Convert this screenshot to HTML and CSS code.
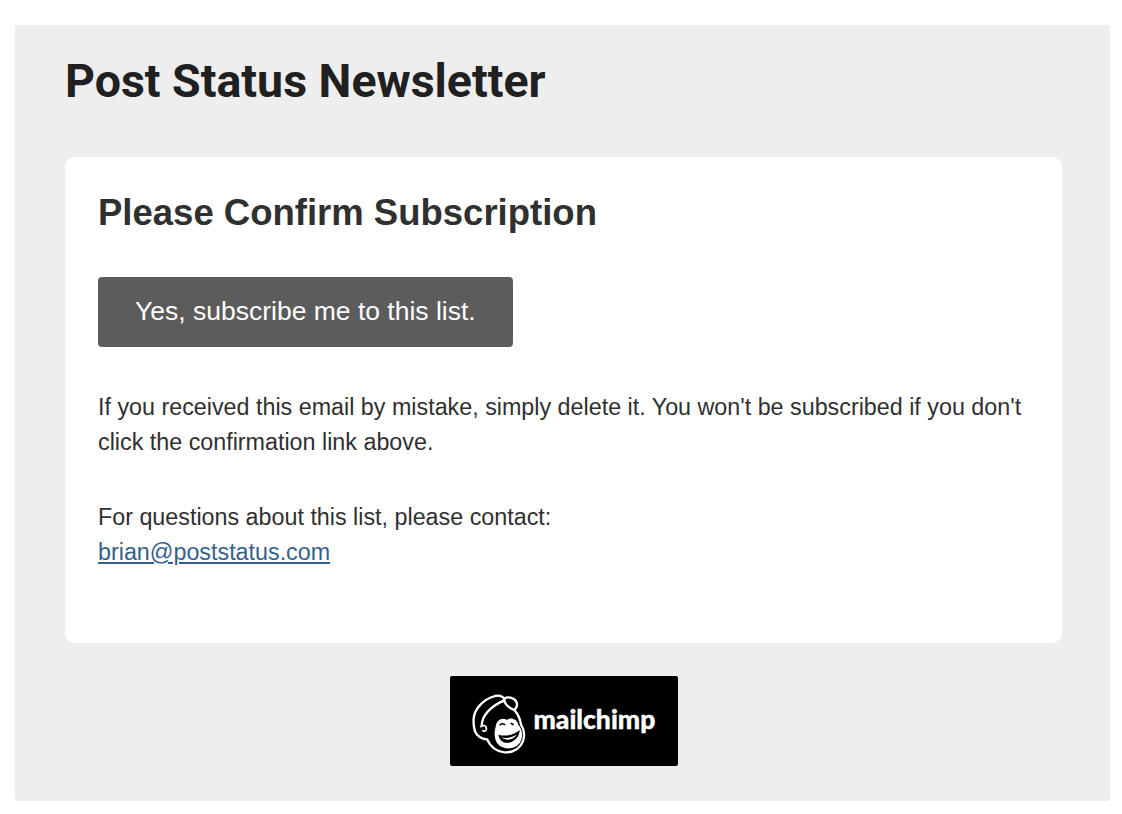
FILE: index.html
```html
<!DOCTYPE html>
<html lang="en">
<head>
    <meta charset="UTF-8">
    <title>Post Status Newsletter</title>
    <link rel="stylesheet" href="styles.css">
</head>
<body>
    <div class="wrapper">
        <h1 class="list-name">Post Status Newsletter</h1>
        <div class="card">
            <h2 class="card-title">Please Confirm Subscription</h2>
            <a class="button" href="#">Yes, subscribe me to this list.</a>
            <p class="copy">If you received this email by mistake, simply delete it. You won't be subscribed if you don't click the confirmation link above.</p>
            <p class="copy">For questions about this list, please contact:<br><a class="contact" href="#">brian@poststatus.com</a></p>
        </div>
        <div class="footer">
            <a class="badge" href="#">
                <svg class="badge-icon" viewBox="0 0 210 210" width="70" height="70">
                    <path class="head" d="M26 98C28 68 55 40 90 30C102 27 112 30 118 38C130 30 150 36 155 50C158 58 154 66 148 72C160 86 166 100 168 116C176 128 180 144 175 162C168 186 144 201 118 199C95 197 76 182 66 160C52 160 36 152 30 136C26 122 25 110 26 98Z"/>
                    <path class="line" d="M50 120C50 90 76 62 116 44M118 38C116 52 130 66 148 72"/>
                    <path class="line-thin" d="M46 124C54 114 66 120 64 130C62 138 54 137 53 132"/>
                    <path class="face" d="M92 122C94 102 112 92 126 102C136 92 156 98 160 116C172 130 175 150 166 168C154 190 120 193 102 178C88 166 86 140 92 122Z"/>
                    <path class="mouth" d="M100 146C120 152 146 148 164 132C164 158 136 178 114 168C106 163 102 155 100 146Z"/>
                    <path class="face" d="M109 154C124 158 144 155 156 145C146 162 124 166 109 154Z"/>
                    <path class="wink" d="M104 118C109 112 116 112 120 117M137 112L146 116"/>
                </svg>
                <span class="badge-text">mailchimp</span>
            </a>
        </div>
    </div>
</body>
</html>
```

FILE: styles.css
```css
html {
    background-color: #fff;
}
body {
    margin: 0;
    padding: 25px 12px 13px 15px;
    font-family: "Liberation Sans", Arial, sans-serif;
    color: #303030;
}
.wrapper {
    background-color: #eee;
    border-radius: 2px;
    padding: 29px 48px 35px 50px;
}
.list-name {
    margin: 0 0 49px;
    font-family: Roboto, sans-serif;
    font-size: 46.5px;
    font-weight: 700;
    line-height: 54px;
    color: #202020;
}
.card {
    background-color: #fff;
    border-radius: 10px;
    padding: 33px 33px 60px;
    height: 486px;
    box-sizing: border-box;
}
.card-title {
    margin: 0 0 42px;
    font-size: 36.5px;
    font-weight: 700;
    line-height: 45px;
}
.button {
    display: inline-block;
    background-color: #5c5c5c;
    border-radius: 4px;
    padding: 0 37px 1px;
    color: #fff;
    font-size: 26.5px;
    line-height: 69px;
    text-decoration: none;
}
.copy {
    margin: 43px 0 -3px;
    font-size: 23.3px;
    line-height: 35px;
}
.contact {
    color: #365f8e;
    text-decoration: underline;
}
.footer {
    display: flex;
    justify-content: center;
    margin-top: 33px;
}
.badge {
    display: flex;
    align-items: center;
    width: 228px;
    height: 90px;
    box-sizing: border-box;
    padding-left: 15px;
    background-color: #000;
    border-radius: 2px;
    text-decoration: none;
}
.badge-icon {
    margin-right: -1px;
}
.badge-text {
    padding-bottom: 4px;
    color: #fff;
    font-family: Lato, sans-serif;
    font-size: 26.5px;
    font-weight: 900;
    -webkit-text-stroke: 0.4px #fff;
}
.head {
    fill: #000;
    stroke: #fff;
    stroke-width: 7;
}
.line {
    fill: none;
    stroke: #fff;
    stroke-width: 7;
}
.line-thin {
    fill: none;
    stroke: #fff;
    stroke-width: 5;
}
.face {
    fill: #fff;
}
.mouth {
    fill: #000;
}
.wink {
    fill: none;
    stroke: #000;
    stroke-width: 5;
}
```
